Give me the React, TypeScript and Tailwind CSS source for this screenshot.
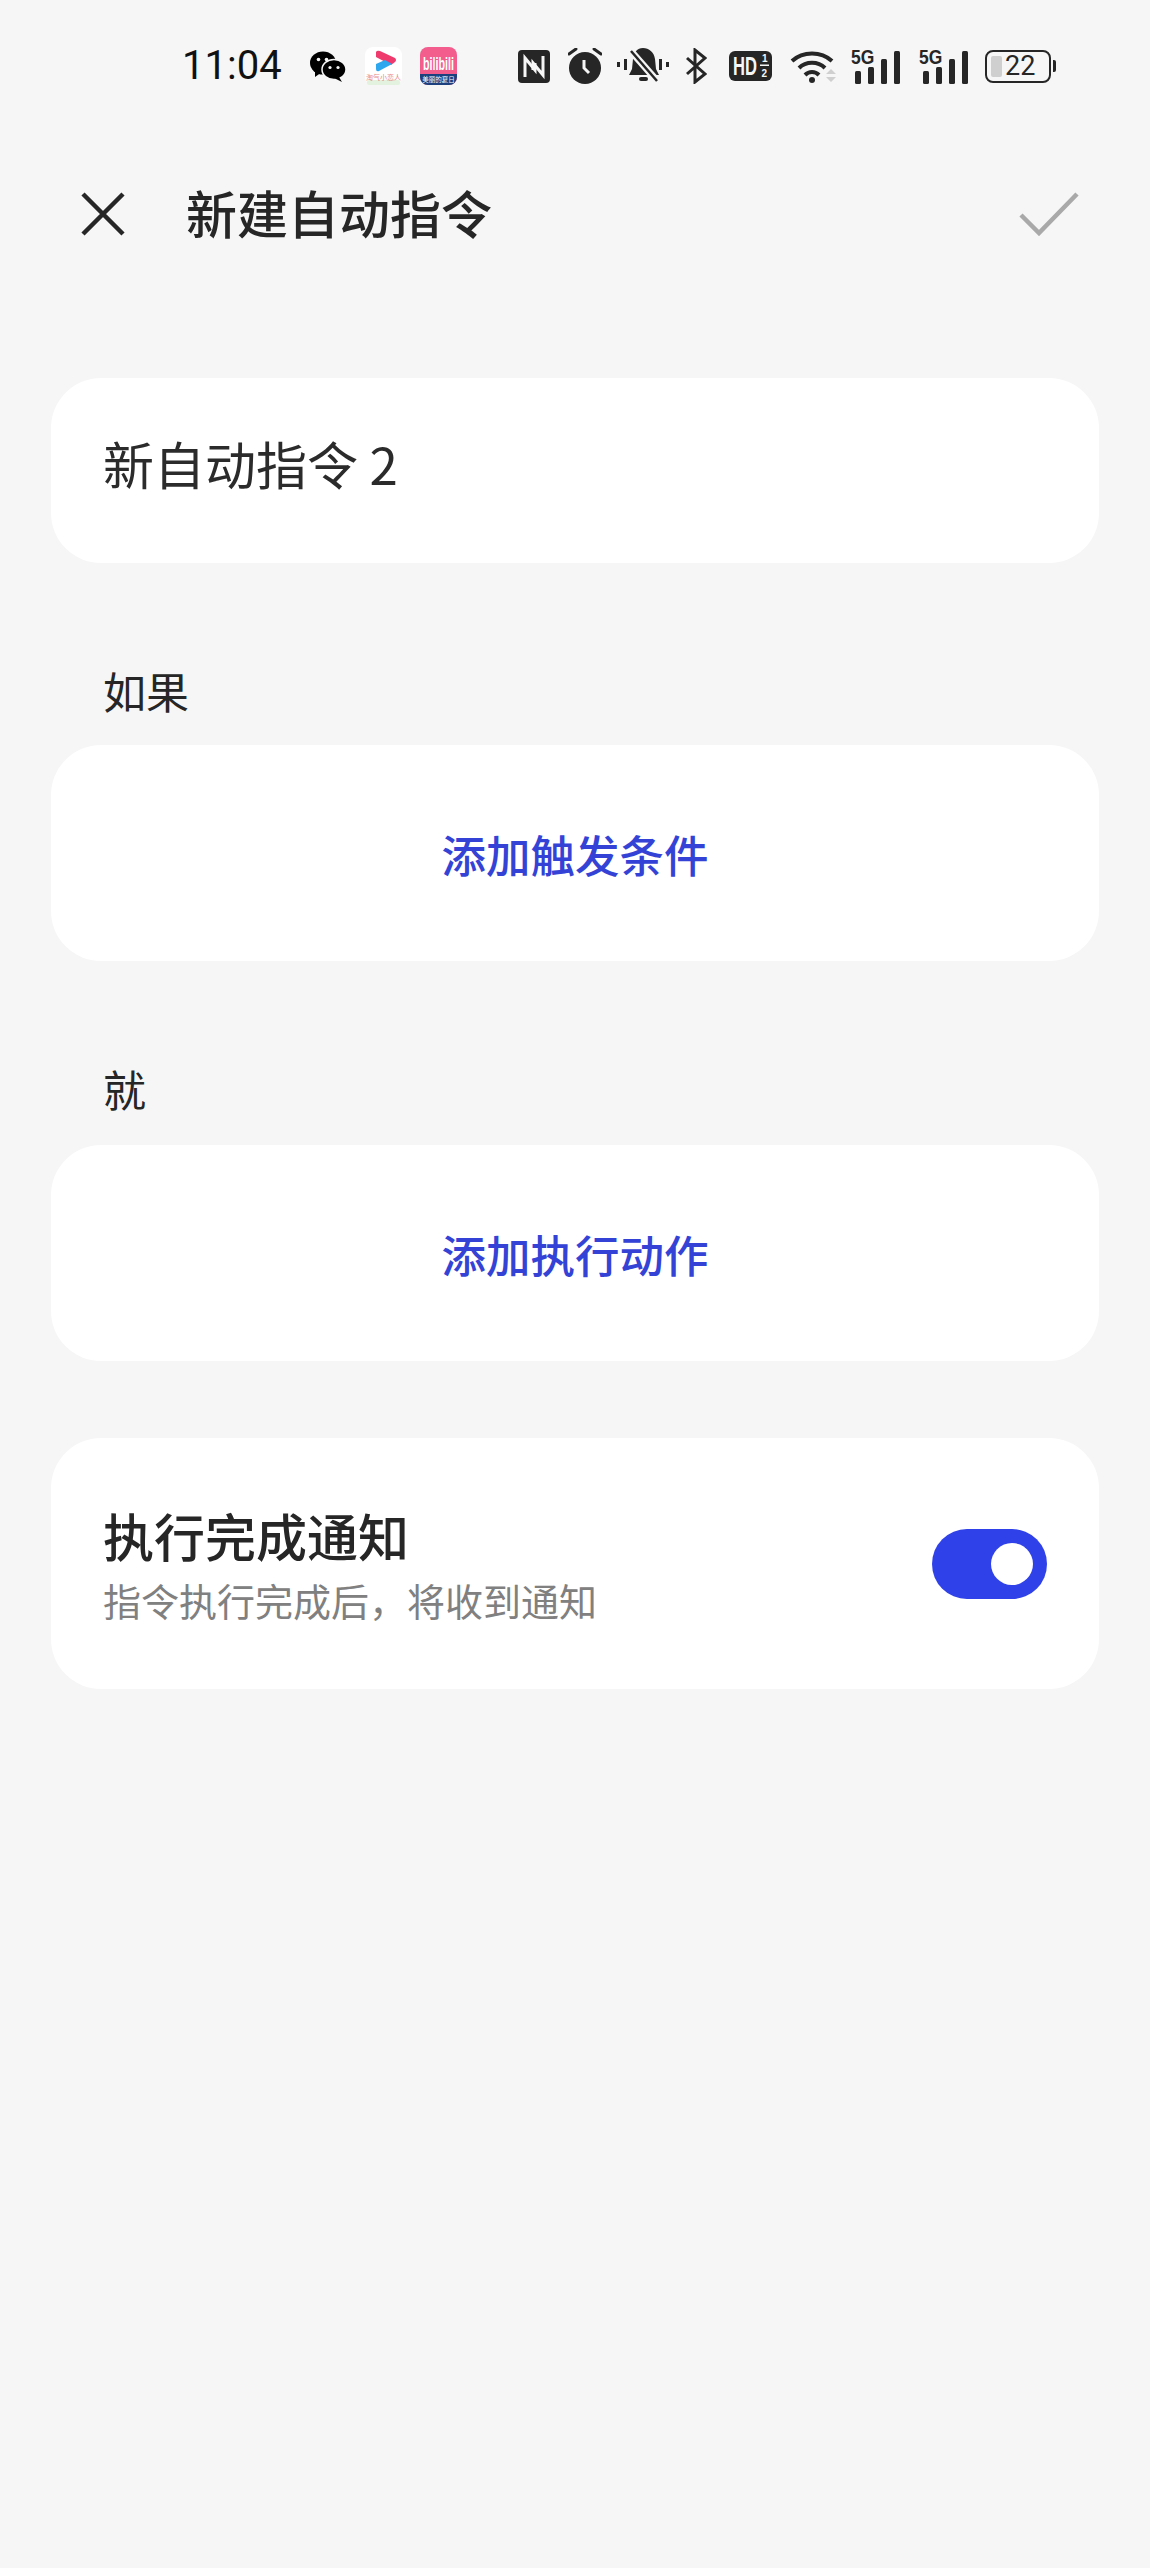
const cjk = { fontFamily: '"Noto Sans CJK SC", "Noto Sans", sans-serif' }
const narrow = { fontFamily: '"Liberation Sans", sans-serif' }

function WechatIcon() {
  return (
    <svg width="36" height="31" viewBox="0 0 36 31" className="ml-[24px]">
      <ellipse cx="13" cy="12" rx="13" ry="11.5" fill="#000" />
      <path d="M5 19 L5 26 L12 21 Z" fill="#000" />
      <ellipse cx="24" cy="18.5" rx="12" ry="10" fill="#000" stroke="#f6f6f6" strokeWidth="1.5" />
      <path d="M29 26 L32 31 L24 27 Z" fill="#000" />
      <circle cx="8.5" cy="8.5" r="1.8" fill="#f6f6f6" />
      <circle cx="16.5" cy="8.5" r="1.8" fill="#f6f6f6" />
      <circle cx="20" cy="16.5" r="1.6" fill="#f6f6f6" />
      <circle cx="28" cy="16.5" r="1.6" fill="#f6f6f6" />
    </svg>
  )
}

function VideoAppIcon() {
  return (
    <svg width="37" height="38" viewBox="0 0 37 38" className="ml-[19px]">
      <rect width="37" height="38" rx="8" fill="#fff" />
      <rect x="2" y="33" width="33" height="5" rx="2" fill="#e3f2df" />
      <path d="M11 5 Q12 3 15 4 L30 11 Q32 13 30 15 L26 18 L11 10 Z" fill="#ee3a6c" />
      <path d="M11 17 L20 13 L27 17 L14 24 Q11 25 11 22 Z" fill="#2ea7ee" />
      <text x="18.5" y="33" fontSize="7" textAnchor="middle" fill="#e88a8a" style={cjk}>淘气小恋人</text>
    </svg>
  )
}

function BiliIcon() {
  return (
    <svg width="37" height="38" viewBox="0 0 37 38" className="ml-[18px]">
      <rect width="37" height="38" rx="8" fill="#f25d8e" />
      <path d="M0 27 H37 V30 A8 8 0 0 1 29 38 H8 A8 8 0 0 1 0 30 Z" fill="#1c3f7d" />
      <text transform="translate(3 23) scale(1 1.7)" fontSize="10.7" fontWeight="700" fill="#fff" style={narrow}>bilibili</text>
      <text x="18.5" y="35" fontSize="6.5" textAnchor="middle" fill="#fff" style={cjk}>美丽的夏日</text>
    </svg>
  )
}

function NfcIcon() {
  return (
    <svg width="32" height="33" viewBox="0 0 32 33" className="ml-[61px]">
      <rect width="32" height="33" rx="4" fill="#262626" />
      <path d="M7 27 V8 L17 20 V13" fill="none" stroke="#f6f6f6" strokeWidth="3" />
      <path d="M25 6 V25 L15 13 V20" fill="none" stroke="#f6f6f6" strokeWidth="3" />
    </svg>
  )
}

function AlarmIcon() {
  return (
    <svg width="34" height="36" viewBox="0 0 34 36" className="ml-[18px]">
      <circle cx="17" cy="20" r="16" fill="#262626" />
      <path d="M1 6 L8 1 M33 6 L26 1" stroke="#262626" strokeWidth="3" strokeLinecap="round" />
      <path d="M16 12 V20 L21 25" fill="none" stroke="#f6f6f6" strokeWidth="3" />
    </svg>
  )
}

function BellOffIcon() {
  return (
    <svg width="52" height="36" viewBox="0 0 52 36" className="ml-[15px]">
      <path d="M26 0 C32 0 37 4 38 11 L39 21 L42 27 H12 L15 21 L16 11 C17 4 20 0 26 0 Z" fill="#262626" />
      <rect x="22" y="29" width="9" height="4" rx="2" fill="#262626" />
      <path d="M12 1 L42 35" stroke="#f6f6f6" strokeWidth="7" />
      <path d="M14 3 L40 33" stroke="#262626" strokeWidth="2.5" />
      <rect x="0" y="14" width="3" height="5" fill="#262626" />
      <rect x="7" y="11" width="3" height="11" fill="#262626" />
      <rect x="42" y="11" width="3" height="11" fill="#262626" />
      <rect x="49" y="14" width="3" height="5" fill="#262626" />
    </svg>
  )
}

function BluetoothIcon() {
  return (
    <svg width="22" height="36" viewBox="0 0 22 36" className="ml-[16px]">
      <path d="M2 10 L20 26 L10 34 V2 L20 10 L2 26" fill="none" stroke="#262626" strokeWidth="3" />
    </svg>
  )
}

function HdIcon() {
  return (
    <svg width="43" height="30" viewBox="0 0 43 30" className="ml-[22px]">
      <rect width="43" height="30" rx="6" fill="#262626" />
      <text transform="translate(4 24) scale(1 1.5)" fontSize="16.6" fontWeight="700" fill="#f6f6f6" style={narrow}>HD</text>
      <text x="33" y="11" fontSize="10" fontWeight="700" fill="#f6f6f6" style={narrow}>1</text>
      <rect x="31" y="13.5" width="9" height="1.5" fill="#f6f6f6" />
      <text x="32.5" y="26" fontSize="10" fontWeight="700" fill="#f6f6f6" style={narrow}>2</text>
    </svg>
  )
}

function WifiIcon() {
  return (
    <svg width="47" height="36" viewBox="0 0 47 36" className="ml-[18px]">
      <path d="M2 13 C13 3 31 3 42 13" fill="none" stroke="#262626" strokeWidth="4" />
      <path d="M9 20 C16 13 28 13 35 20" fill="none" stroke="#262626" strokeWidth="4" />
      <path d="M15 27 C19 23 25 23 29 27" fill="none" stroke="#262626" strokeWidth="4" />
      <circle cx="22" cy="32" r="3" fill="#262626" />
      <path d="M36 26 L41 21 L46 26 Z M36 29 L46 29 L41 34 Z" fill="#cfcfcf" />
    </svg>
  )
}

function SignalIcon({ margin }: { margin: string }) {
  return (
    <svg width="50" height="39" viewBox="0 -4 50 39" className={`mb-[4px] ${margin}`}>
      <text transform="translate(0 15) scale(1 1.15)" fontSize="17.5" fontWeight="700" fill="#262626" style={narrow}>5G</text>
      <rect x="4" y="22" width="6" height="13" rx="1.5" fill="#262626" />
      <rect x="17" y="18" width="6" height="17" rx="1.5" fill="#262626" />
      <rect x="30" y="10" width="6" height="25" rx="1.5" fill="#262626" />
      <rect x="43" y="2" width="6" height="33" rx="1.5" fill="#262626" />
    </svg>
  )
}

function BatteryIcon() {
  return (
    <div className="ml-[16px] flex items-center">
      <div className="flex h-[33px] w-[66px] items-center rounded-[8px] border-[2px] border-[#262626] pl-[4px]">
        <div className="h-[21px] w-[11px] rounded-[2px] bg-[#cfcfcf]" />
        <span className="ml-[3px] text-[27px] leading-none text-[#262626]" style={{ fontFamily: 'Roboto, sans-serif' }}>22</span>
      </div>
      <div className="ml-[2px] h-[12px] w-[3px] rounded-r-[2px] bg-[#262626]" />
    </div>
  )
}

function StatusBar() {
  return (
    <div className="flex h-[132px] items-center pl-[182px]">
      <span className="w-[104px] whitespace-nowrap text-[40px] leading-[48px] text-[#111111]" style={{ fontFamily: 'Roboto, sans-serif' }}>11:04</span>
      <WechatIcon />
      <VideoAppIcon />
      <BiliIcon />
      <NfcIcon />
      <AlarmIcon />
      <BellOffIcon />
      <BluetoothIcon />
      <HdIcon />
      <WifiIcon />
      <SignalIcon margin="ml-[14px]" />
      <SignalIcon margin="ml-[18px]" />
      <BatteryIcon />
    </div>
  )
}

function Header() {
  return (
    <div className="flex h-[164px] items-center pl-[80px] pr-[71px]">
      <svg width="46" height="46" viewBox="0 0 46 46">
        <path d="M3 3 L43 43 M43 3 L3 43" stroke="#262626" strokeWidth="4.5" />
      </svg>
      <h1 className="ml-[60px] flex-1 pb-[3px] text-[51px] font-medium text-[#262626]" style={cjk}>新建自动指令</h1>
      <svg width="60" height="44" viewBox="0 0 60 44">
        <path d="M2 23 L20 41 L58 2" fill="none" stroke="#a9a9a9" strokeWidth="4.5" />
      </svg>
    </div>
  )
}

function ActionCard({ label }: { label: string }) {
  return (
    <div className="flex h-[216px] items-center justify-center rounded-[50px] bg-white pt-[2px]">
      <span className="text-[44.5px] font-medium text-[#3443d6]" style={cjk}>{label}</span>
    </div>
  )
}

function SectionLabel({ text, spacing }: { text: string; spacing: string }) {
  return (
    <div className={`${spacing} pl-[52px] text-[43px] leading-[60px] text-[#262626]`} style={cjk}>{text}</div>
  )
}

export default function App() {
  return (
    <div className="h-[2568px] bg-[#f6f6f6]" style={cjk}>
      <StatusBar />
      <Header />
      <div className="mt-[82px] flex flex-col px-[51px]">
        <div className="flex h-[185px] items-start rounded-[50px] bg-white pl-[52px] pt-[50px]">
          <span className="text-[51px] leading-[70px] text-[#2b2b2b]" style={cjk}>新自动指令 2</span>
        </div>

        <SectionLabel text="如果" spacing="mb-[25px] mt-[97px]" />
        <ActionCard label="添加触发条件" />

        <SectionLabel text="就" spacing="mb-[27px] mt-[97px]" />
        <ActionCard label="添加执行动作" />

        <div className="mt-[77px] flex h-[251px] items-center justify-between rounded-[50px] bg-white pl-[52px] pr-[52px]">
          <div className="flex flex-col">
            <span className="text-[51px] font-medium leading-[66px] text-[#262626]" style={cjk}>执行完成通知</span>
            <span className="mt-[6px] text-[38px] leading-[52px] text-[#808080]" style={cjk}>指令执行完成后，将收到通知</span>
          </div>
          <div className="flex h-[70px] w-[115px] items-center justify-end rounded-full bg-[#2f41e8] pr-[14px]">
            <div className="h-[42px] w-[42px] rounded-full bg-white" />
          </div>
        </div>
      </div>
    </div>
  )
}
